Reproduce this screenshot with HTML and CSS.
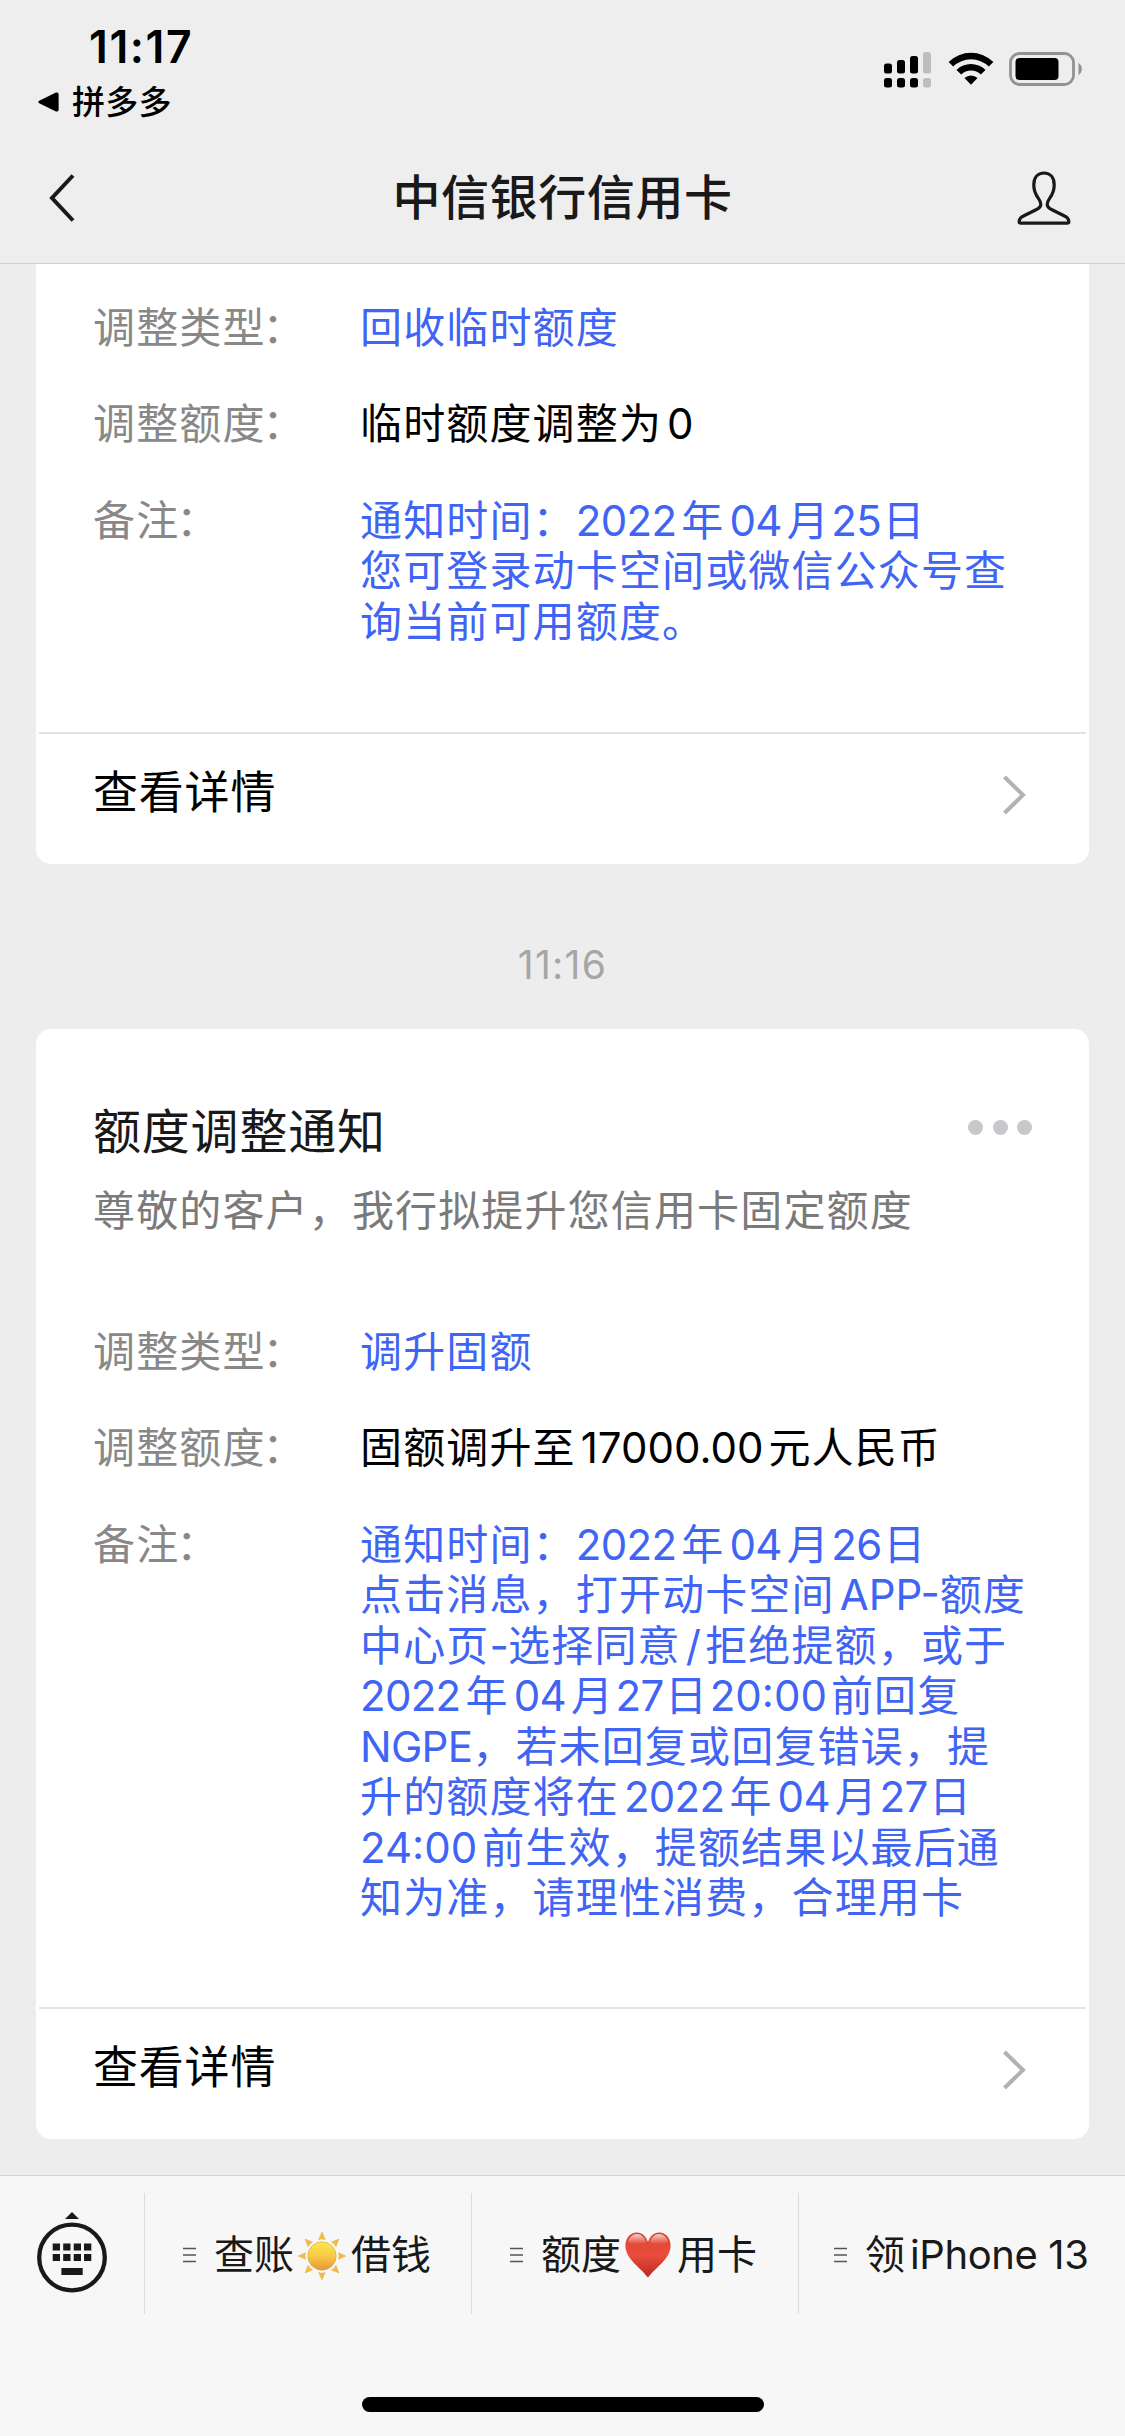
FILE: index.html
```html
<!DOCTYPE html>
<html lang="zh-CN">
<head>
<meta charset="utf-8">
<title>中信银行信用卡</title>
<link rel="stylesheet" href="styles.css">
</head>
<body>
<div class="screen">
  <header class="header">
    <div class="status">
      <div class="status-left">
        <div class="clock">11:17</div>
        <div class="back-app">
          <svg width="21" height="20" viewBox="0 0 21 20"><path d="M1.2 8.8 18 .6Q20.6-.2 20.6 2.2V17.8Q20.6 20.2 18 19.4L1.2 11.2Q-.6 10 1.2 8.8Z"/></svg>
          <span>拼多多</span>
        </div>
      </div>
      <div class="status-icons">
        <svg width="47" height="36" viewBox="0 0 47 36">
          <rect x="0" y="11.500" width="8" height="10" rx="2.500"/><rect x="13" y="8" width="8" height="13.500" rx="2.500"/><rect x="26" y="4" width="8" height="17.500" rx="2.500"/>
          <rect x="0" y="26" width="8" height="9.500" rx="2.500"/><rect x="13" y="26" width="8" height="9.500" rx="2.500"/><rect x="26" y="26" width="8" height="9.500" rx="2.500"/>
          <g fill="#bdbdbd"><rect x="39" y="0" width="8" height="21.500" rx="2.500"/><rect x="39" y="26" width="8" height="9.500" rx="2.500"/></g>
        </svg>
        <svg width="46" height="34" viewBox="0 0 46 34">
          <path d="M.6 9.900A32 32 0 0 1 45.400 9.900L40.800 14.500A25.500 25.500 0 0 0 5.200 14.500Z"/>
          <path d="M8.500 17.900A20.700 20.700 0 0 1 37.500 17.900L32.800 22.600A14 14 0 0 0 13.200 22.600Z"/>
          <path d="M16.500 26A9.500 9.500 0 0 1 29.500 26L23 32.800Z"/>
        </svg>
        <svg width="74" height="34" viewBox="0 0 74 34">
          <rect x="1.500" y="1.500" width="63" height="31" rx="9" fill="none" stroke="#929292" stroke-width="2.800"/>
          <rect x="6.500" y="6" width="43" height="22" rx="4"/>
          <path d="M69.500 11A7 7 0 0 1 69.500 23Z" fill="#929292"/>
        </svg>
      </div>
    </div>
    <nav class="nav">
      <svg class="nav-back" width="28" height="50" viewBox="0 0 28 50"><path d="M25 2.500 4 25 25 47.500" fill="none" stroke="#191919" stroke-width="4"/></svg>
      <h1>中信银行信用卡</h1>
      <svg class="nav-user" width="54" height="54" viewBox="0 0 54 54"><path d="M27 2C20.500 2 16.800 7 16.800 14 16.800 26 23.800 27 23.800 33.500 23.800 36.500 21.500 37.500 19.500 38.500L6.500 45C3 46.500 2.200 48.500 2.200 51 2.200 52 2.800 52.200 4 52.200H50C51.200 52.200 51.800 52 51.800 51 51.800 48.500 51 46.500 47.500 45L34.500 38.500C32.500 37.500 30.200 36.500 30.200 33.500 30.200 27 37.200 26 37.200 14 37.200 7 33.500 2 27 2Z" fill="none" stroke="#191919" stroke-width="3.200"/></svg>
    </nav>
  </header>

  <main class="chat">
    <article class="card card-clipped">
      <dl class="fields">
        <dt>调整类型<span class="colon">：</span></dt><dd class="blue">回收临时额度</dd>
        <dt>调整额度<span class="colon">：</span></dt><dd>临时额度调整为<span class="n">0</span></dd>
        <dt>备注<span class="colon">：</span></dt>
        <dd class="blue">通知时间：<span class="n s">2022</span>年<span class="n">04</span>月<span class="n m">25</span>日<br>您可登录动卡空间或微信公众号查<br>询当前可用额度。</dd>
      </dl>
      <a class="detail"><span>查看详情</span><svg width="24" height="40" viewBox="0 0 24 40"><path d="M2.500 2 21 20 2.500 38" fill="none" stroke="#b2b2b2" stroke-width="4"/></svg></a>
    </article>

    <time class="stamp">11:16</time>

    <article class="card">
      <div class="card-head">
        <h2>额度调整通知</h2>
        <div class="more"><i></i><i></i><i></i></div>
      </div>
      <p class="intro">尊敬的客户，我行拟提升您信用卡固定额度</p>
      <dl class="fields">
        <dt>调整类型<span class="colon">：</span></dt><dd class="blue">调升固额</dd>
        <dt>调整额度<span class="colon">：</span></dt><dd>固额调升至<span class="n w">17000.00</span>元人民币</dd>
        <dt>备注<span class="colon">：</span></dt>
        <dd class="blue">通知时间：<span class="n s">2022</span>年<span class="n">04</span>月<span class="n m">26</span>日<br>点击消息，打开动卡空间<span class="n e w">APP-</span>额度<br>中心页<span class="n s e">-</span>选择同意<span class="n">/</span>拒绝提额，或于<br><span class="n s">2022</span>年<span class="n">04</span>月<span class="n m">27</span>日<span class="n m w">20:00</span>前回复<br><span class="n s e">NGPE</span>，若未回复或回复错误，提<br>升的额度将在<span class="n">2022</span>年<span class="n">04</span>月<span class="n m">27</span>日<br><span class="n s w">24:00</span>前生效，提额结果以最后通<br>知为准，请理性消费，合理用卡</dd>
      </dl>
      <a class="detail"><span>查看详情</span><svg width="24" height="40" viewBox="0 0 24 40"><path d="M2.500 2 21 20 2.500 38" fill="none" stroke="#b2b2b2" stroke-width="4"/></svg></a>
    </article>
  </main>

  <footer class="footer">
    <div class="menu">
      <button class="keyboard" aria-label="键盘">
        <svg width="70" height="82" viewBox="0 0 70 82" fill="#191919">
          <path d="M35 0 42 7H28Z"/>
          <circle cx="35" cy="45.500" r="32.800" fill="none" stroke="#191919" stroke-width="4.300"/>
          <path d="M15.700 31.500h7.300v7h-7.300zM26.200 31.500h7.300v7h-7.300zM36.700 31.500h7.300v7h-7.300zM47 31.500h7.300v7h-7.300zM15.700 42h7.300v7h-7.300zM26.200 42h7.300v7h-7.300zM36.700 42h7.300v7h-7.300zM47 42h7.300v7h-7.300zM24.400 56h21.300v7h-21.300z"/>
        </svg>
      </button>
      <div class="item">
        <svg class="bars" width="13" height="16" viewBox="0 0 13 16"><path d="M0 1.500H13M0 8H13M0 14.500H13" stroke="#555" stroke-width="1.300"/></svg>
        <span>查账</span>
        <svg class="emoji" width="50" height="50" viewBox="-25 -25 50 50">
          <defs>
            <linearGradient id="sun" x1="0" y1="0" x2="0" y2="1"><stop offset="0" stop-color="#fbe84f"/><stop offset=".5" stop-color="#f8ca48"/><stop offset="1" stop-color="#e89535"/></linearGradient>
            <path id="ray" d="M0-24 3.300-16.500Q0-17.700-3.300-16.500Z"/>
          </defs>
          <circle r="14.200" fill="url(#sun)" stroke="#e3a23b" stroke-width=".6"/>
          <g fill="#f3bd45" stroke="#dfa344" stroke-width=".4">
            <use href="#ray"/><use href="#ray" transform="rotate(45)"/><use href="#ray" transform="rotate(90)"/><use href="#ray" transform="rotate(135)"/><use href="#ray" transform="rotate(180)"/><use href="#ray" transform="rotate(225)"/><use href="#ray" transform="rotate(270)"/><use href="#ray" transform="rotate(315)"/>
          </g>
        </svg>
        <span>借钱</span>
      </div>
      <div class="item">
        <svg class="bars" width="13" height="16" viewBox="0 0 13 16"><path d="M0 1.500H13M0 8H13M0 14.500H13" stroke="#555" stroke-width="1.300"/></svg>
        <span>额度</span>
        <svg class="emoji heart" width="46" height="46" viewBox="0 0 46 46">
          <defs>
            <linearGradient id="heart" x1="0" y1="0" x2="0" y2="1"><stop offset="0" stop-color="#dc4334"/><stop offset=".5" stop-color="#ea4d3d"/><stop offset="1" stop-color="#b92a1d"/></linearGradient>
            <linearGradient id="gloss" x1="0" y1="0" x2="0" y2="1"><stop offset="0" stop-color="#fff" stop-opacity=".75"/><stop offset="1" stop-color="#fff" stop-opacity="0"/></linearGradient>
          </defs>
          <path d="M23 10C21 4 17 .4 12 .4 5 .4.400 6 .4 13.500.4 27 15 35 23 45.600 31 35 45.600 27 45.600 13.500 45.600 6 41 .4 34 .4 29 .4 25 4 23 10Z" fill="url(#heart)"/>
          <path d="M3 10C4 5 8 2 12 2S19.500 5 21 10C18 13 6 13 3 10ZM25 10C26.500 5 30 2 34 2S42 5 43 10C40 13 28 13 25 10Z" fill="url(#gloss)"/>
        </svg>
        <span>用卡</span>
      </div>
      <div class="item">
        <svg class="bars" width="13" height="16" viewBox="0 0 13 16"><path d="M0 1.500H13M0 8H13M0 14.500H13" stroke="#555" stroke-width="1.300"/></svg>
        <span>领<span class="latin">iPhone 13</span></span>
      </div>
    </div>
    <div class="home"></div>
  </footer>
</div>
</body>
</html>
```
FILE: styles.css
```css
* { box-sizing: border-box; margin: 0; padding: 0; }

body {
  background: #ededed;
  color: #000;
  font-family: Inter, "Noto Sans CJK SC", sans-serif;
}

svg { display: block; flex: none; }

.screen {
  width: 1125px;
  height: 2436px;
  display: flex;
  flex-direction: column;
  overflow: hidden;
}

.header {
  height: 264px;
  flex: none;
  border-bottom: 1px solid #d0d0d0;
  background: #eee;
}

.status {
  height: 132px;
  display: flex;
  justify-content: space-between;
  padding: 0 42px 0 38px;
}

.clock {
  margin: 24px 0 0 51px;
  font-size: 44.500px;
  font-weight: 600;
  line-height: 46px;
  letter-spacing: 1.600px;
}

.back-app {
  display: flex;
  align-items: center;
  gap: 13px;
  height: 36px;
  margin-top: 14px;
  font-size: 33px;
  font-weight: 500;
  letter-spacing: .3px;
  line-height: 36px;
}

.status-icons {
  display: flex;
  gap: 17px;
  padding-top: 52px;
}

.status-icons svg:last-child { margin-left: -2px; }

.nav {
  height: 130px;
  display: grid;
  grid-template-columns: 100px 1fr 100px;
  align-items: center;
  padding-top: 2px;
}

.nav-back { margin-left: 48px; }
.nav-user { margin-left: -8px; }

.nav h1 {
  text-align: center;
  font-size: 48px;
  font-weight: 500;
  line-height: 60px;
  letter-spacing: .6px;
  color: #191919;
}

.chat {
  flex: 1;
  padding: 0 36px;
}

.card {
  height: 1110px;
  border-radius: 15px;
  background: #fff;
  display: flex;
  flex-direction: column;
}

.card-clipped {
  height: 600px;
  padding-top: 39px;
  border-radius: 0 0 15px 15px;
}

.card-head {
  display: flex;
  justify-content: space-between;
  align-items: center;
  height: 70px;
  margin: 68px 57px 0 57px;
}

.card-head h2 {
  font-size: 48px;
  font-weight: 400;
  line-height: 60px;
  letter-spacing: .8px;
  color: #191919;
}

.more { display: flex; gap: 9.500px; margin-bottom: 9px; }

.more i {
  width: 15px;
  height: 15px;
  border-radius: 50%;
  background: #c8c8cc;
}

.intro {
  margin: 19px 0 91px 57px;
  font-size: 42px;
  line-height: 50px;
  letter-spacing: 1.150px;
  color: #7a7a7a;
}

.fields {
  flex: 1;
  display: grid;
  grid-template-columns: 267px 1fr;
  row-gap: 45.700px;
  align-content: start;
  padding-left: 57px;
  font-size: 42px;
  line-height: 50.570px;
  letter-spacing: 1.150px;
  white-space: nowrap;
}

.fields dt { color: #888; }
.colon { margin-left: -3px; }
.blue { color: #4064f4; }

/* Latin runs get a little air beside the ideographs */
.n { margin: 0 5px; letter-spacing: -.7px; }
.n.s { margin-left: 0; }
.n.e { margin-right: 0; }
.n.m { margin: 0 1.500px; }
.n.w { letter-spacing: 0; }
.n.m.w { margin-right: 4px; }

.detail {
  height: 132px;
  flex: none;
  display: flex;
  justify-content: space-between;
  align-items: center;
  margin: 0 3px;
  padding: 0 60px 8px 54px;
  border-top: 2px solid #e3e3e3;
  font-size: 45px;
  line-height: 60px;
  letter-spacing: .8px;
}

.detail span { margin-bottom: 5px; }

.stamp {
  display: block;
  height: 165px;
  padding-top: 71px;
  text-align: center;
  font-size: 39px;
  line-height: 60px;
  letter-spacing: 1.300px;
  color: #a6a6a6;
}

.footer {
  height: 261px;
  flex: none;
  border-top: 1px solid #d4d4d4;
  background: #f7f7f7;
}

.menu {
  height: 122px;
  margin-top: 17px;
  display: grid;
  grid-template-columns: 144px 327px 327px 327px;
}

.keyboard {
  align-self: start;
  border: 0;
  background: none;
  padding: 19px 0 0 37px;
}

.item {
  display: flex;
  align-items: center;
  height: 121px;
  padding: 3px 0 0 38px;
  border-left: 1px solid #dcdcdc;
  font-size: 40px;
  line-height: 60px;
  color: #191919;
  white-space: nowrap;
}

.item:last-child { padding-left: 35px; }
.bars { margin-right: 18px; }
.emoji { margin: 1px 4px 0 3px; }
.heart { margin: 0 6px 0 4px; }
.latin { margin-left: 5px; letter-spacing: -.4px; }

.home {
  width: 402px;
  height: 15px;
  margin: 82px auto 0;
  border-radius: 8px;
  background: #000;
}
```
